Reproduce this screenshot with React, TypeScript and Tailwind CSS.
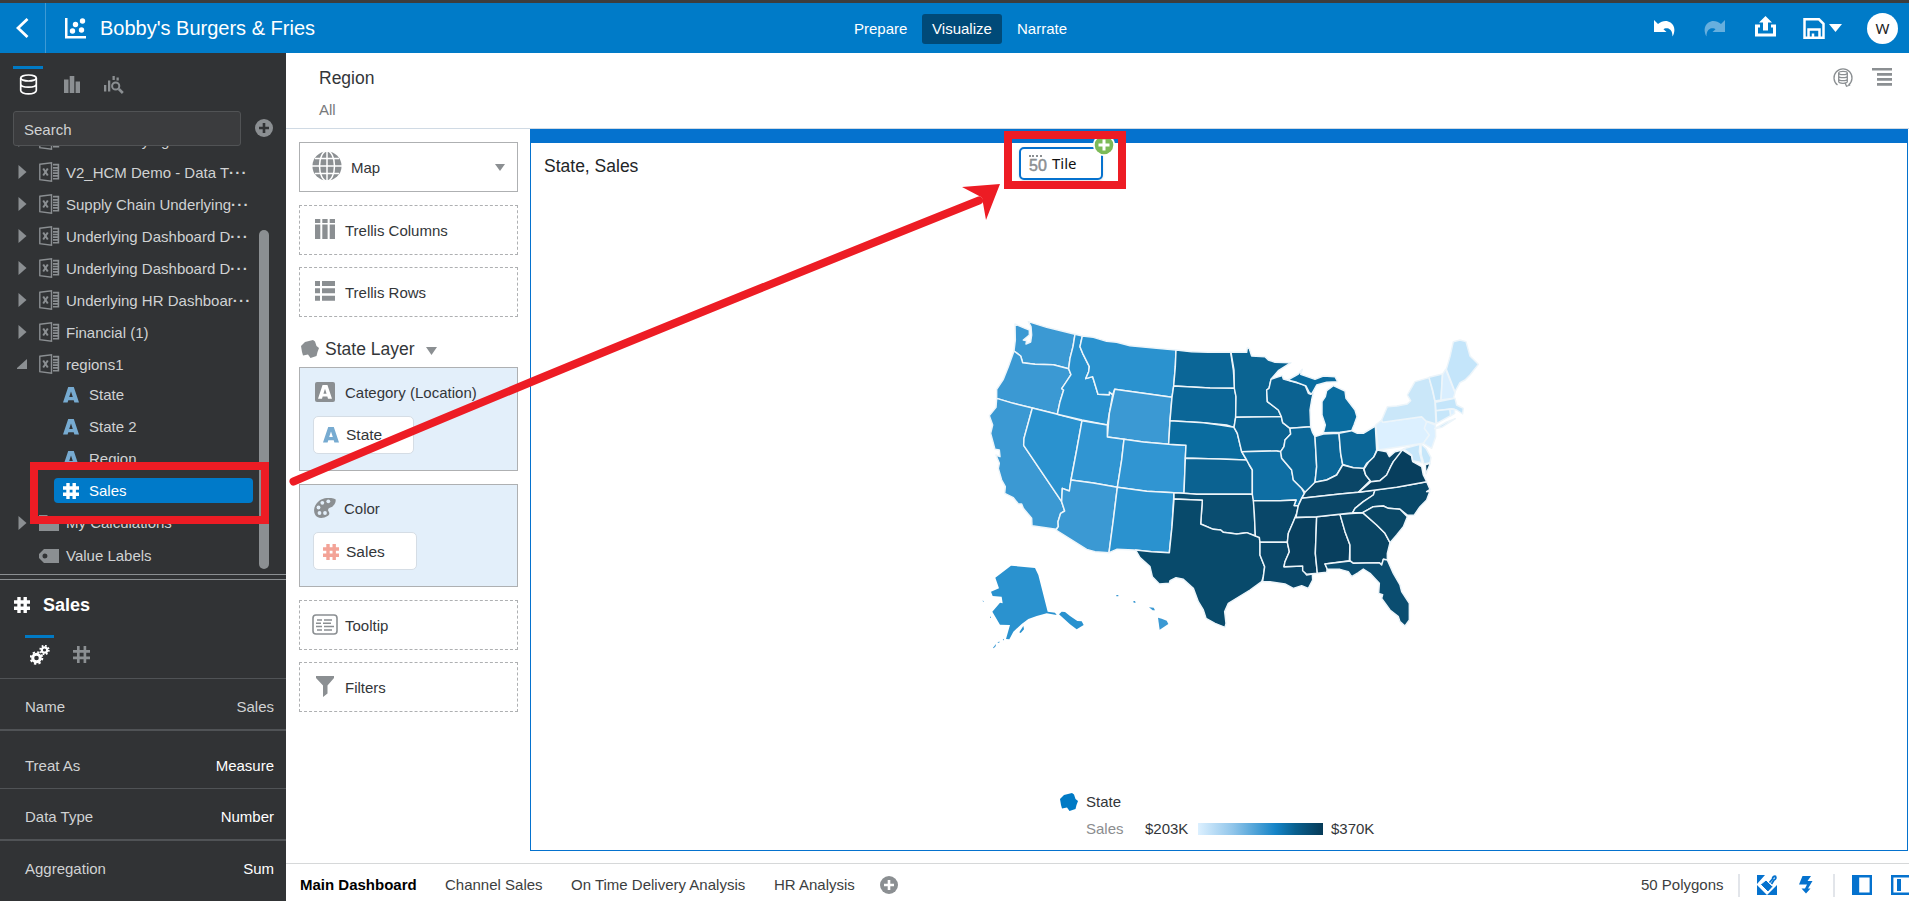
import type { ReactNode } from "react";

type StateShape = [name: string, fill: string, points: string];

const STATES: StateShape[] = [
  ["WA", "#3b99d3", "135,72 160,83 178,90 178,105 160,120 170,122 168,132 182,126 185,105 183,80 175,65 230,82 315,103 309,140 300,175 296,206 250,194 195,193 158,188 152,168 132,153 136,120"],
  ["OR", "#3b99d3", "132,153 152,168 158,188 195,193 250,194 296,206 303,224 288,248 275,266 281,270 270,305 262,343 187,324 130,310 80,295 80,268 100,238 115,200"],
  ["CA", "#3b99d3", "80,295 130,310 187,324 162,415 161,436 275,605 284,633 272,640 264,665 265,680 258,688 186,677 185,655 160,625 155,612 145,612 130,593 104,580 106,560 95,540 85,505 88,490 78,465 90,470 88,450 75,448 62,400 68,375 58,347 78,322"],
  ["NV", "#2a92cf", "187,324 262,343 336,362 320,450 303,540 298,573 277,565 275,605 161,436 162,415"],
  ["ID", "#2a92cf", "315,103 337,108 330,140 338,160 358,200 356,215 347,236 368,230 384,283 418,284 418,276 428,284 412,375 336,360 262,343 270,305 281,270 275,266 303,224 296,206 300,175 309,140"],
  ["MT", "#2a92cf", "337,108 370,112 410,124 440,127 480,137 560,145 618,150 616,200 611,258 606,292 520,280 434,268 428,284 418,276 418,284 384,283 368,230 347,236 356,215 358,200 338,160 330,140"],
  ["WY", "#3b99d3", "434,268 520,280 606,292 600,362 596,433 520,426 462,418 412,411 418,340"],
  ["UT", "#3095d2", "336,362 412,375 412,411 462,418 455,480 442,562 370,549 303,540 320,450"],
  ["CO", "#3095d2", "462,418 520,426 596,433 648,436 646,475 642,580 612,578 530,574 442,562 455,480"],
  ["AZ", "#3b99d3", "303,540 370,549 442,562 430,660 417,758 375,755 350,748 258,690 265,680 264,665 272,640 284,633 275,605 277,565 298,573"],
  ["NM", "#2a92cf", "442,562 530,574 612,578 606,680 598,758 545,755 491,750 440,748 417,758 430,660"],
  ["ND", "#0b6697", "618,150 665,155 715,157 782,157 790,210 794,265 720,264 611,258 616,200"],
  ["SD", "#0b6697", "611,258 720,264 794,265 798,290 797,352 792,382 770,375 700,368 600,362 606,292"],
  ["NE", "#0a6c9f", "600,362 700,368 750,375 792,382 802,400 815,455 830,480 740,477 646,474 648,436 596,433"],
  ["KS", "#0b6291", "646,475 750,477 830,480 838,495 847,510 847,583 680,583 642,580"],
  ["OK", "#0a4d70", "612,578 642,580 680,583 847,583 852,602 853,640 856,708 830,698 800,702 760,697 752,690 730,688 692,672 697,601 612,597"],
  ["TX", "#084a6b", "612,597 697,601 692,672 730,688 752,690 760,697 800,702 830,698 856,708 868,712 870,728 870,765 884,800 880,830 875,845 840,870 775,910 764,935 768,970 765,982 735,970 708,955 700,930 685,905 670,865 640,838 618,833 600,842 598,850 568,852 547,830 540,800 510,773 497,750 545,755 598,758 606,680"],
  ["MN", "#0b6492", "783,157 830,157 832,143 838,146 845,168 885,170 895,180 915,187 963,188 925,212 903,238 897,265 890,270 892,305 925,330 934,350 797,352 798,290 793,265 792,210"],
  ["IA", "#0b6291", "797,352 934,350 938,368 960,385 962,402 945,420 942,440 932,455 920,453 815,455 802,400 792,382"],
  ["WI", "#0b6291", "903,238 920,232 937,227 940,237 1005,255 1015,280 1022,283 1033,265 1025,300 1020,330 1022,380 960,385 938,368 934,350 925,330 892,305 890,270 897,265"],
  ["MI", "#0a6c9f", "953,240 985,222 997,208 992,223 1035,238 1060,228 1095,230 1103,245 1070,247 1040,255 1025,282 1018,278 1008,258 980,247"],
  ["MI-lower", "#0a6c9f", "1090,257 1125,273 1128,295 1155,330 1161,350 1152,375 1145,392 1110,397 1060,398 1066,375 1056,345 1056,305 1066,290 1070,272"],
  ["MO", "#0e6ea3", "815,455 920,453 933,455 935,475 965,510 970,540 995,565 1003,580 995,595 985,617 972,617 978,600 930,602 850,602 847,583 847,510 838,495 830,480"],
  ["IL", "#0b6697", "960,385 1022,380 1028,398 1035,410 1040,500 1035,547 1025,570 1005,577 995,565 970,540 965,510 935,475 932,455 942,440 945,420 962,402"],
  ["IN", "#0b6697", "1035,410 1060,402 1107,400 1112,460 1118,495 1100,525 1070,540 1035,547 1040,500"],
  ["OH", "#0b6697", "1107,400 1145,392 1162,400 1180,400 1216,378 1220,450 1210,475 1190,490 1180,507 1150,503 1118,493 1112,460"],
  ["AR", "#094769", "850,602 930,602 978,600 972,617 985,617 980,640 970,665 955,700 952,727 870,727 868,712 856,708 853,640"],
  ["LA", "#094769", "870,727 952,727 958,755 945,785 942,800 998,798 1000,812 1010,825 1027,822 1028,840 1015,865 995,857 970,865 945,852 900,845 878,845 884,800 870,765"],
  ["MS", "#083f5e", "975,653 1040,650 1036,760 1042,820 1010,823 998,812 998,798 942,800 945,785 958,755 952,727 955,700 970,665"],
  ["AL", "#083f5e", "1040,650 1110,643 1125,695 1140,735 1138,782 1065,792 1072,805 1070,817 1042,820 1036,760"],
  ["GA", "#094463", "1110,643 1178,638 1220,675 1245,700 1260,728 1252,760 1252,780 1240,778 1235,795 1228,788 1150,790 1140,782 1140,735 1125,695"],
  ["FL", "#0a4d70", "1065,792 1140,783 1150,790 1228,788 1235,795 1240,778 1252,780 1270,820 1290,855 1295,875 1318,910 1318,960 1305,978 1290,965 1285,950 1260,930 1235,895 1238,884 1226,880 1228,850 1200,820 1180,807 1165,818 1145,830 1135,815 1110,808 1072,808"],
  ["KY", "#0a4667", "1005,577 1035,547 1070,540 1100,525 1118,495 1150,503 1180,505 1187,525 1200,542 1165,577 1110,582 995,595"],
  ["TN", "#0a4667", "995,595 1110,582 1165,577 1215,570 1210,585 1180,605 1155,625 1148,638 1040,650 978,652 985,617"],
  ["NC", "#084869", "1215,570 1300,558 1370,545 1380,568 1370,575 1380,573 1370,600 1350,620 1332,646 1312,645 1290,628 1255,625 1240,618 1210,620 1178,638 1148,638 1155,625 1180,605 1210,585"],
  ["SC", "#0a4766", "1178,638 1210,620 1240,618 1255,625 1290,628 1312,650 1300,680 1280,705 1260,728 1245,700 1220,675"],
  ["WV", "#0a4667", "1222,450 1250,455 1258,470 1275,455 1297,450 1290,465 1270,485 1262,500 1250,525 1230,542 1203,545 1187,525 1182,507 1195,487 1212,470"],
  ["VA", "#073e5d", "1297,450 1325,468 1328,485 1355,500 1360,525 1370,545 1280,562 1165,577 1203,545 1230,542 1250,525 1262,500 1270,485"],
  ["VA-shore", "#073e5d", "1366,494 1381,490 1368,522"],
  ["PA", "#dcf0ff", "1217,375 1235,360 1238,367 1355,350 1370,365 1365,385 1378,405 1360,430 1225,450"],
  ["NJ", "#dcf0ff", "1370,365 1396,375 1397,410 1385,445 1360,430 1378,405 1363,385"],
  ["MD", "#c6e6fa", "1300,446 1350,433 1348,455 1356,488 1328,482 1325,465"],
  ["DE", "#c6e6fa", "1353,432 1368,445 1383,473 1380,488 1362,492 1354,465"],
  ["NY", "#cae7f9", "1235,360 1252,320 1280,318 1312,312 1322,302 1312,285 1335,245 1377,233 1388,275 1395,305 1398,372 1368,363 1355,350 1238,367"],
  ["NY-island", "#cae7f9", "1394,386 1430,366 1456,356 1415,382"],
  ["VT", "#c2e4f9", "1377,232 1417,222 1413,300 1395,303 1388,270"],
  ["NH", "#d9eefe", "1418,222 1427,208 1455,278 1450,295 1413,300"],
  ["ME", "#c4e5fa", "1429,208 1440,170 1450,125 1470,120 1488,125 1500,168 1525,193 1500,225 1485,240 1470,248 1455,275"],
  ["MA", "#c4e5fa", "1396,307 1455,295 1460,315 1480,325 1478,342 1460,330 1445,326 1398,332"],
  ["CT", "#c6e6fa", "1398,332 1440,328 1442,347 1400,370"],
  ["RI", "#dcf0ff", "1440,328 1453,328 1454,340 1442,348"],
  ["AK", "#2a92cf", "123,797 195,804 205,825 233,935 255,938 260,945 230,940 200,948 175,957 155,972 130,995 118,1018 108,1017 120,975 90,974 67,935 90,908 98,910 95,890 68,888 63,875 87,865 76,833"],
  ["AK-panhandle", "#2a92cf", "267,943 275,935 285,936 300,948 322,963 335,964 341,975 320,988 300,973"],
  ["AK-kodiak", "#2a92cf", "148,997 160,978 162,988 152,999"],
  ["HI", "#3b99d3", "564,953 575,956 590,962 595,972 569,989"],
];

const ISLETS = "M439 885h6v4h-6zM490 903h5l2 5h-6zM537 922l14 1 4 8h-7zM38 901l4 4h-3zM60 950h3v3h-3zM69 1043l9-11-1 7-6 6zM82 1029l6-5v4zM98 1020l4-4v5z";

function UsMap() {
  return (
    <svg width="540" height="350" viewBox="0 0 1620 1050" aria-label="Sales by state">
      <g stroke="#edf5fa" strokeWidth="4.4" strokeLinejoin="round">
        {STATES.map(([name, fill, points]) => {
          const island = name.startsWith("AK") || name === "HI";
          return <polygon key={name} points={points} fill={fill} strokeWidth={island ? 0 : 4.4} />;
        })}
      </g>
      <path d={ISLETS} fill="#3b99d3" />
    </svg>
  );
}

function ExcelIcon() {
  return (
    <svg width="21" height="20" viewBox="0 0 21 20" fill="none" stroke="#8b8f92" strokeWidth="1.4">
      <path d="M.8 2.3L12.500.9v18.200L.8 17.700z" />
      <path d="M4.200 6.500l4.600 7M8.800 6.500l-4.600 7" strokeWidth="2" />
      <path d="M14 2.600h5.400v14.200H14" strokeWidth="1.600" />
      <path d="M14 5.800h5.500M14 8.500h5.500M14 11.200h5.500M14 13.900h5.500" strokeWidth="1.700" />
    </svg>
  );
}

function LetterA({ color = "#77abd1", size = 16 }: { color?: string; size?: number }) {
  return (
    <svg width={size} height={size} viewBox="0 0 16 16" fill={color} fillRule="evenodd">
      <path d="M5.200 0h5.600L16 15.600h-4.600l-.7-2.400H5.300l-.7 2.400H0zM8 4.400L6.200 10h3.600z" />
    </svg>
  );
}

function Hash({ color, size = 16, weight = 3.4 }: { color: string; size?: number; weight?: number }) {
  return (
    <svg width={size} height={size} viewBox="0 0 16 16" stroke={color} strokeWidth={weight}>
      <path d="M5 0v16M11.2 0v16M0 5h16M0 11.2h16" />
    </svg>
  );
}

function PlusDisc({ cross }: { cross: string }) {
  return (
    <svg width="18" height="18" viewBox="0 0 18 18">
      <circle cx="9" cy="9" r="9" fill="#8b8f92" />
      <path d="M9 4v10M4 9h10" stroke={cross} strokeWidth="2.6" />
    </svg>
  );
}

function Caret({ open = false }: { open?: boolean }) {
  return (
    <svg width="12" height="14" viewBox="0 0 12 14" fill="#8b8f92">
      <path d={open ? "M10 2v10H-1z" : "M1.500 0l8 7-8 7z"} />
    </svg>
  );
}

function Polygon({ color }: { color: string }) {
  return (
    <svg width="18" height="18" viewBox="0 0 18 18" fill={color}>
      <path d="M4 2L12 0l2 1.5L15.5 6 18 8l-1.5 4-1 4-6 2L7 14.5l-5 1L1 12 0 6z" />
    </svg>
  );
}

function DatasetRow({ label, cut = false, open = false }: { label: string; cut?: boolean; open?: boolean }) {
  return (
    <div className="flex h-8 shrink-0 items-center pl-[17px]">
      <span className="w-[22px]"><Caret open={open} /></span>
      <span className="w-[27px]"><ExcelIcon /></span>
      <span className="whitespace-nowrap pt-px">
        {label}
        {cut && <span className="font-bold tracking-[1.2px]">···</span>}
      </span>
    </div>
  );
}

function FieldRow({ label }: { label: string }) {
  return (
    <div className="flex h-8 shrink-0 items-center pl-[63px]">
      <span className="w-[26px]"><LetterA /></span>
      <span>{label}</span>
    </div>
  );
}

function Property({ label, value, className }: { label: string; value: string; className: string }) {
  return (
    <div className={`flex shrink-0 items-center justify-between border-[#505356] pr-3 pl-[25px] ${className}`}>
      <span>{label}</span>
      <span>{value}</span>
    </div>
  );
}

function Sidebar() {
  return (
    <aside className="flex w-[286px] shrink-0 flex-col bg-[#313335] text-[15px] leading-[18px] text-[#d0d2d3]">
      <div className="flex h-[58px] shrink-0 items-start pt-[13px] pl-[13px]">
        <div className="flex h-[30px] w-[30px] flex-col items-center border-t-[3px] border-[#007ac5] pt-[5px]">
          <svg width="19" height="21" viewBox="0 0 19 21" fill="none" stroke="#fff" strokeWidth="1.7">
            <ellipse cx="9.5" cy="4" rx="7.8" ry="3" />
            <path d="M1.700 4v12.500c0 1.900 3.500 3.400 7.800 3.400s7.800-1.500 7.800-3.400V4M1.700 10c0 1.900 3.500 3.200 7.800 3.200s7.800-1.300 7.800-3.200" />
          </svg>
        </div>
        <svg className="mt-[10px] ml-[20px]" width="18" height="17" viewBox="0 0 18 17" fill="#8b8f92">
          <path d="M1 3.5h4.5V17H1zM6.700 0h4.600v17H6.700zM12.600 5.500h4.400V17h-4.400z" />
        </svg>
        <svg className="mt-[10px] ml-[22px]" width="21" height="18" viewBox="0 0 21 18" fill="#8b8f92">
          <path d="M1 9h2.300v6.500H1zM5 4.500h2.300v11H5zM9.500 0h2.300v4H9.500zM13.500 1.500h2.300v3h-2.300z" />
          <circle cx="12.700" cy="10" r="3.600" fill="none" stroke="#8b8f92" strokeWidth="2" />
          <path d="M15.800 13l4 4" stroke="#8b8f92" strokeWidth="2.600" />
        </svg>
      </div>
      <div className="flex shrink-0 items-center pl-[13px]">
        <div className="flex h-[35px] w-[228px] items-center rounded-[3px] border border-[#515355] bg-[#3b3c3e] px-[10px] pt-[2px]">Search</div>
        <span className="-mt-px ml-[14px]"><PlusDisc cross="#313335" /></span>
      </div>
      <div className="relative flex h-[428px] shrink-0 flex-col overflow-hidden">
        <div className="-mt-[22px] flex flex-col">
          <DatasetRow label="Test Underlying" />
          <DatasetRow label="V2_HCM Demo - Data T" cut />
          <DatasetRow label="Supply Chain Underlying" cut />
          <DatasetRow label="Underlying Dashboard D" cut />
          <DatasetRow label="Underlying Dashboard D" cut />
          <DatasetRow label="Underlying HR Dashboar" cut />
          <DatasetRow label="Financial (1)" />
          <DatasetRow label="regions1" open />
          <div className="-mt-px flex flex-col">
            <FieldRow label="State" />
            <FieldRow label="State 2" />
            <FieldRow label="Region" />
            <div className="my-[3px] ml-[54px] flex h-[25px] w-[199px] items-center rounded-[4px] bg-[#007ac9] pl-[9px] text-white">
              <span className="w-[26px]"><Hash color="#fff" /></span>Sales
            </div>
          </div>
          <div className="flex h-[34px] items-center pl-[17px]">
            <span className="w-[22px]"><Caret /></span>
            <span className="w-[27px]">
              <svg width="20" height="16" viewBox="0 0 20 16" fill="#8b8f92"><path d="M0 0h8l2 2h10v14H0z" /></svg>
            </span>
            My Calculations
          </div>
          <div className="flex h-8 items-center pl-[39px]">
            <span className="w-[27px]">
              <svg width="20" height="14" viewBox="0 0 20 14" fill="#8b8f92" fillRule="evenodd"><path d="M5 0h15v14H5L0 9V5zM6 4.500a2.500 2.500 0 100 5 2.500 2.500 0 000-5z" /></svg>
            </span>
            Value Labels
          </div>
        </div>
        <div className="absolute top-[84px] left-[259px] h-[339px] w-[10px] rounded-full bg-[#8b8f92]" />
      </div>
      <div className="h-[6px] shrink-0 border-y border-[#8b8f92]" />
      <div className="flex h-[55px] shrink-0 items-center pb-[6px] pl-[14px] text-[18px] font-bold text-white">
        <span className="w-[29px]"><Hash color="#fff" size={16} /></span>Sales
      </div>
      <div className="flex h-[44px] shrink-0 items-start border-b border-[#505356] pl-[25px]">
        <div className="w-[29px] border-t-[3px] border-[#007ac5] pt-[7px] pl-[5px]">
          <svg width="20" height="20" viewBox="0 0 20 20" fill="none" stroke="#fff">
            <circle cx="6.500" cy="13" r="3.800" strokeWidth="3" />
            <circle cx="6.500" cy="13" r="5.800" strokeWidth="2" strokeDasharray="2.280 2.280" />
            <circle cx="14.500" cy="5" r="2.700" strokeWidth="2.200" />
            <circle cx="14.500" cy="5" r="4.300" strokeWidth="1.800" strokeDasharray="1.690 1.690" />
          </svg>
        </div>
        <span className="mt-[11px] ml-[19px]"><Hash color="#8b8f92" size={17} weight={2.500} /></span>
      </div>
      <Property label="Name" value="Sales" className="h-[52px] border-b-2 pt-[5px]" />
      <div className="flex flex-col [&>div>span:last-child]:text-white">
        <Property label="Treat As" value="Measure" className="h-[58px] border-b pt-[13px]" />
        <Property label="Data Type" value="Number" className="h-[52px] border-b-2 pt-[5px]" />
        <Property label="Aggregation" value="Sum" className="h-[53px] pt-[2px]" />
      </div>
    </aside>
  );
}

function Slot({ icon, label, className }: { icon: ReactNode; label: string; className: string }) {
  return (
    <div className={`flex shrink-0 items-center border border-dashed border-[#aeb0b2] pt-px pl-[12px] ${className}`}>
      <span className="flex w-[33px] items-center">{icon}</span>{label}
    </div>
  );
}

function GrammarPanel() {
  return (
    <section className="flex w-[244px] shrink-0 flex-col pt-[13px] pl-[13px] text-[15px] leading-[18px] text-[#333639] [&>div]:w-[219px]">
      <div className="flex h-[50px] shrink-0 items-center border border-[#aeb0b2] pl-[12px]">
        <svg className="-mt-[3px]" width="30" height="30" viewBox="0 0 30 30">
          <circle cx="15" cy="15" r="14.600" fill="#8b8f92" />
          <g fill="none" stroke="#fff" strokeWidth="1.500">
            <path d="M15 0v30M0 15h30M3 7.500h24M3 22.500h24" />
            <ellipse cx="15" cy="15" rx="7.500" ry="15" />
          </g>
        </svg>
        <span className="ml-[9px] grow pt-[2px]">Map</span>
        <svg className="mr-[12px]" width="10" height="7" viewBox="0 0 10 7" fill="#8b8f92"><path d="M0 0h10L5 7z" /></svg>
      </div>
      <Slot className="mt-[13px] h-[50px]" label="Trellis Columns" icon={
        <svg className="-mt-[3px] ml-[3px]" width="20" height="20" viewBox="0 0 20 20" fill="#8b8f92"><path d="M0 0h5.300v4H0zM7.300 0h5.300v4H7.300zM14.700 0H20v4h-5.300zM0 5.500h5.300V20H0zM7.300 5.500h5.300V20H7.300zM14.700 5.500H20V20h-5.300z" /></svg>
      } />
      <Slot className="mt-[12px] h-[50px]" label="Trellis Rows" icon={
        <svg className="-mt-[3px] ml-[3px]" width="20" height="20" viewBox="0 0 20 20" fill="#8b8f92"><path d="M0 0h5v5H0zM7 0h13v5H7zM0 7.300h5v5H0zM7 7.300h13v5H7zM0 14.700h5v5H0zM7 14.700h13v5H7z" /></svg>
      } />
      <div className="mt-[16px] flex h-[31px] shrink-0 items-center pl-[2px] text-[17.500px]">
        <Polygon color="#8b8f92" />
        <span className="ml-[6px]">State Layer</span>
        <svg className="mt-1 ml-[11px]" width="11" height="8" viewBox="0 0 11 8" fill="#8b8f92"><path d="M0 0h11L5.500 8z" /></svg>
      </div>
      <div className="mt-[3px] h-[104px] shrink-0 border border-[#aeb0b2] bg-[#e3effa] pt-[14px] pl-[13px]">
        <div className="flex items-center">
          <span className="ml-[2px] flex h-5 w-5 items-center justify-center rounded-[2px] bg-[#8b8f92]"><LetterA color="#fff" size={14} /></span>
          <span className="ml-[10px] pt-px">Category (Location)</span>
        </div>
        <div className="mt-[14px] flex h-[38px] w-[101px] items-center rounded-[5px] border border-[#d5dde5] bg-white pl-[9px] text-[15.500px]">
          <span className="w-[23px]"><LetterA /></span>State
        </div>
      </div>
      <div className="mt-[13px] h-[103px] shrink-0 border border-[#aeb0b2] bg-[#e3effa] pt-[13px] pl-[13px]">
        <div className="flex items-center">
          <svg className="ml-px" width="22" height="20" viewBox="0 0 22 20">
            <path d="M21.500 1.200C17-1 9.500-.5 5 3-1 7.500-1.500 16 3.500 19c3 1.800 7 .8 10-1 2.500-1.600 2-3.200 1-4.700-1.200-2 .2-3.300 2.500-4 2.500-.8 5.500-5.300 4.500-8.100z" fill="#8b8f92" />
            <g fill="#e3effa"><circle cx="4.500" cy="9.500" r="1.900" /><circle cx="8.300" cy="4.800" r="1.900" /><circle cx="14.300" cy="3.300" r="1.900" /><circle cx="5.500" cy="15" r="1.900" /><circle cx="11" cy="15" r="1.900" /></g>
          </svg>
          <span className="ml-[8px] pt-[2px]">Color</span>
        </div>
        <div className="mt-[14px] flex h-[38px] w-[104px] items-center rounded-[5px] border border-[#d5dde5] bg-white pt-px pl-[9px] text-[15.500px]">
          <span className="w-[23px]"><Hash color="#f3a397" /></span>Sales
        </div>
      </div>
      <Slot className="mt-[13px] h-[50px]" label="Tooltip" icon={
        <svg className="-mt-[2px]" width="26" height="21" viewBox="0 0 26 21" fill="none" stroke="#8b8f92" strokeWidth="1.600">
          <rect x="1" y="1" width="24" height="19" rx="3" />
          <path d="M5 6h5M12 6h8M4 9.300h5M11 9.300h8M4 12.600h6M12 12.600h10M5 16h5M12 16h8" strokeWidth="1.500" />
        </svg>
      } />
      <Slot className="mt-[12px] h-[50px]" label="Filters" icon={
        <svg className="-mt-[2px] ml-[4px]" width="18" height="21" viewBox="0 0 18 21" fill="#8b8f92"><path d="M0 0h18v2l-6.500 7.500v8L7 21V9.500L0 2z" /></svg>
      } />
    </section>
  );
}

function Header() {
  return (
    <header className="flex h-[53px] shrink-0 items-center border-t-[3px] border-[#3d3d3d] bg-[#007bc8] text-[15px] text-white">
      <div className="flex h-full w-[46px] items-center border-r border-[#3d9ad5] pl-[16px]">
        <svg width="13" height="20" viewBox="0 0 13 20" fill="none" stroke="#fff" strokeWidth="2.800"><path d="M11.500 1L2 10l9.500 9" /></svg>
      </div>
      <svg className="ml-[18px]" width="22" height="21" viewBox="0 0 22 21" fill="#fff">
        <path d="M1 0h2.500v18H22v2.500H1z" />
        <circle cx="8.500" cy="13" r="2.700" /><circle cx="11.500" cy="6.500" r="2.700" /><circle cx="17.500" cy="12" r="2.700" /><circle cx="18.500" cy="3" r="2.700" />
      </svg>
      <h1 className="ml-[14px] w-[736px] text-[20px] leading-[24px]">Bobby&apos;s Burgers &amp; Fries</h1>
      <nav className="flex items-center pt-px">
        <span className="ml-[18px] w-[68px] pt-px">Prepare</span>
        <span className="flex h-[30px] w-20 items-center justify-center rounded-[3px] bg-[#004a78] pt-px">Visualize</span>
        <span className="ml-[15px] pt-px">Narrate</span>
      </nav>
      <div className="ml-auto flex items-center pr-[11px]">
        <svg width="21" height="18" viewBox="0 0 21 18" fill="#fff"><path d="M0 1l4 4C8 1.500 13 1 16.500 3.500c4.500 3 5 9 2 14C18.500 12.500 16.500 10 13.500 9.300 11.500 9 10.500 9.500 9.500 10.200L12.500 13H0z" /></svg>
        <svg className="ml-[29px]" width="21" height="18" viewBox="0 0 21 18" fill="#66afde"><path d="M21 1l-4 4C13 1.500 8 1 4.500 3.500c-4.500 3-5 9-2 14C2.500 12.500 4.500 10 7.500 9.300c2-.3 3 .2 4 .9L8.500 13H21z" /></svg>
        <svg className="-mt-[3px] ml-[30px]" width="21" height="21" viewBox="0 0 21 21" fill="#fff"><path d="M0 8.500h5v3H3v6h15v-6h-2v-3h5V20.500H0zM10.500 0l6.500 6.500h-4V14.500H8V6.500H4z" /></svg>
        <svg className="ml-[27px]" width="22" height="21" viewBox="0 0 22 21" fill="none" stroke="#fff" strokeWidth="2.500"><path d="M1.500 1.300h14.500l4.500 4.500v13.900h-19zM5.500 19v-7.500h11V19M10 19v-3.500" /></svg>
        <svg className="ml-[4px]" width="13" height="8" viewBox="0 0 13 8" fill="#fff"><path d="M0 0h13L6.500 8z" /></svg>
        <span className="ml-[25px] flex h-[31px] w-[31px] items-center justify-center rounded-full bg-white font-['Noto_Sans',sans-serif] text-[15px] leading-[18px] text-[#222]">W</span>
      </div>
    </header>
  );
}

function FilterBar() {
  return (
    <div className="flex h-[76px] shrink-0 justify-between border-b border-[#d0dae4] pl-[33px]">
      <div className="flex flex-col pt-[14px]">
        <span className="text-[17.500px] leading-[22px] text-[#333639]">Region</span>
        <span className="mt-[12px] text-[15px] leading-[18px] text-[#77797b]">All</span>
      </div>
      <div className="flex items-start gap-[19px] pt-[14px] pr-[17px]">
        <svg width="20" height="21" viewBox="0 0 20 21" fill="none" stroke="#8b8f92" strokeWidth="1.300">
          <path d="M4.500 18A9 9 0 1115.500 18M12 15.800l1.500 3.500 3.700-1.300" />
          <ellipse cx="10" cy="6" rx="4.300" ry="1.700" />
          <path d="M5.700 6v8.500c0 1 2 1.800 4.300 1.800s4.300-.8 4.300-1.800V6M5.700 9c0 1 2 1.700 4.300 1.700s4.300-.7 4.300-1.700M5.700 12c0 1 2 1.700 4.300 1.700s4.300-.7 4.300-1.700" />
        </svg>
        <svg className="mt-px" width="20" height="18" viewBox="0 0 20 18" fill="#8b8f92"><path d="M0 0h20v2.500H0zM5 5h15v2.700H5zM5 10h15v2.700H5zM5 15h15v2.700H5z" /></svg>
      </div>
    </div>
  );
}

function Canvas() {
  return (
    <main className="relative flex h-[722px] w-[1378px] shrink-0 flex-col border border-t-[14px] border-[#0572ce] text-[15px] text-[#333639]">
      <h2 className="h-[157px] pt-[12px] pl-[13px] text-[17.500px] leading-[22px] text-[#222527]">State, Sales</h2>
      <div className="ml-[439px] h-[350px]"><UsMap /></div>
      <div className="mt-[142px] ml-[529px] flex flex-col leading-[18px]">
        <div className="flex items-center">
          <Polygon color="#007ac5" /><span className="ml-[8px] pt-px">State</span>
        </div>
        <div className="mt-[9px] flex items-center pl-[26px]">
          <span className="w-[59px] text-[#8b8d8f]">Sales</span>
          <span className="w-[53px]">$203K</span>
          <span className="h-3 w-[125px] bg-[linear-gradient(to_right,#dcf0ff,#90c5ea_28%,#1584c7_62%,#09608f_78%,#063a57)]" />
          <span className="ml-[8px]">$370K</span>
        </div>
      </div>
      <div className="absolute top-[4px] left-[488px] flex h-[33px] w-[84px] items-center rounded-[5px] border-2 border-[#0572ce] bg-white pl-[8px] shadow">
        <span className="flex w-[23px] flex-col text-[16px] leading-[14px] text-[#8b8f92]">
          <span className="h-[2px] w-[13px] border-t-2 border-dotted border-[#8b8f92]" />
          <span className="pt-[2px] [-webkit-text-stroke:0.5px_#8b8f92]">50</span>
        </span>
        <span className="pb-[2px] font-['Noto_Sans',sans-serif] text-[15px] leading-[18px] text-[#111]">Tile</span>
      </div>
      <svg className="absolute -top-[9px] left-[562px]" width="22" height="22" viewBox="0 0 22 22">
        <circle cx="11" cy="11" r="11" fill="#fff" /><circle cx="11" cy="11" r="9.300" fill="#7cba58" />
        <path d="M11 5.500v11M5.500 11h11" stroke="#fff" strokeWidth="3" />
      </svg>
    </main>
  );
}

function Footer() {
  return (
    <footer className="mt-auto flex h-[38px] shrink-0 items-center border-t border-[#d6d8d9] pt-[5px] pl-[14px] text-[15px] text-[#3c3e40]">
      <span className="w-[145px] font-bold text-black">Main Dashboard</span>
      <span className="w-[126px]">Channel Sales</span>
      <span className="w-[203px]">On Time Delivery Analysis</span>
      <span className="w-[106px]">HR Analysis</span>
      <PlusDisc cross="#fff" />
      <span className="ml-[743px] w-[97px]">50 Polygons</span>
      <span className="h-[23px] w-[2px] bg-[#e2e5ea]" />
      <svg className="ml-[17px]" width="21" height="20" viewBox="0 0 21 20">
        <path d="M0 0h8L0 9zM0 10l10 10H0zM20 10v10H10z" fill="#0572ce" />
        <path d="M3.500 9.500L9 5l7 6.500-5 5.500z" fill="#0572ce" stroke="#fff" strokeWidth="1" />
        <path d="M9.800 5.500L15 10.500" stroke="#fff" strokeWidth="1" />
        <path d="M12.500 7.500L15.500 4c0-2 1.500-3 3-2.700.8 1.500.3 3.200-1.500 3.700L14.500 9" fill="none" stroke="#0572ce" strokeWidth="1.800" />
      </svg>
      <svg className="ml-[20px]" width="15" height="18" viewBox="0 0 15 18" fill="#0572ce"><path d="M4.500 0h8.500L9.500 5h5L10 12.500h2.500L8 17.500 3.500 12.500H7L9 8.500H1z" /></svg>
      <span className="ml-[20px] h-[23px] w-[2px] bg-[#e2e5ea]" />
      <svg className="ml-[17px]" width="20" height="20" viewBox="0 0 20 20" fill="#fff" stroke="#0572ce" strokeWidth="2.400"><path d="M1.200 1.200h17.600v17.600H1.200z" /><path d="M2 2h4v16H2z" fill="#0572ce" /></svg>
      <svg className="ml-[19px] shrink-0" width="18" height="20" viewBox="0 0 18 20" fill="none" stroke="#0572ce" strokeWidth="2.400"><path d="M24 1.200H1.200v17.600H24" /><path d="M8 4v12" strokeWidth="4" /></svg>
    </footer>
  );
}

function Callouts() {
  return (
    <svg className="pointer-events-none absolute top-0 left-0" width="1909" height="901" viewBox="0 0 1909 901">
      <g fill="none" stroke="#ed1c24">
        <rect x="34" y="466" width="231" height="54" strokeWidth="8" />
        <rect x="1008" y="135" width="114" height="50" strokeWidth="8" />
        <path d="M293.500 481.500C520 385 750 292 979 200.500" strokeWidth="8" strokeLinecap="round" />
      </g>
      <path d="M1000 184l-38 3 20 10.500 4 22.500z" fill="#ed1c24" />
    </svg>
  );
}

export default function App() {
  return (
    <div className="relative flex h-[901px] w-[1909px] flex-col overflow-hidden bg-white font-['Liberation_Sans',Arial,sans-serif]">
      <Header />
      <div className="flex h-[848px]">
        <Sidebar />
        <div className="flex w-[1623px] flex-col">
          <FilterBar />
          <div className="flex">
            <GrammarPanel />
            <Canvas />
          </div>
          <Footer />
        </div>
      </div>
      <Callouts />
    </div>
  );
}
